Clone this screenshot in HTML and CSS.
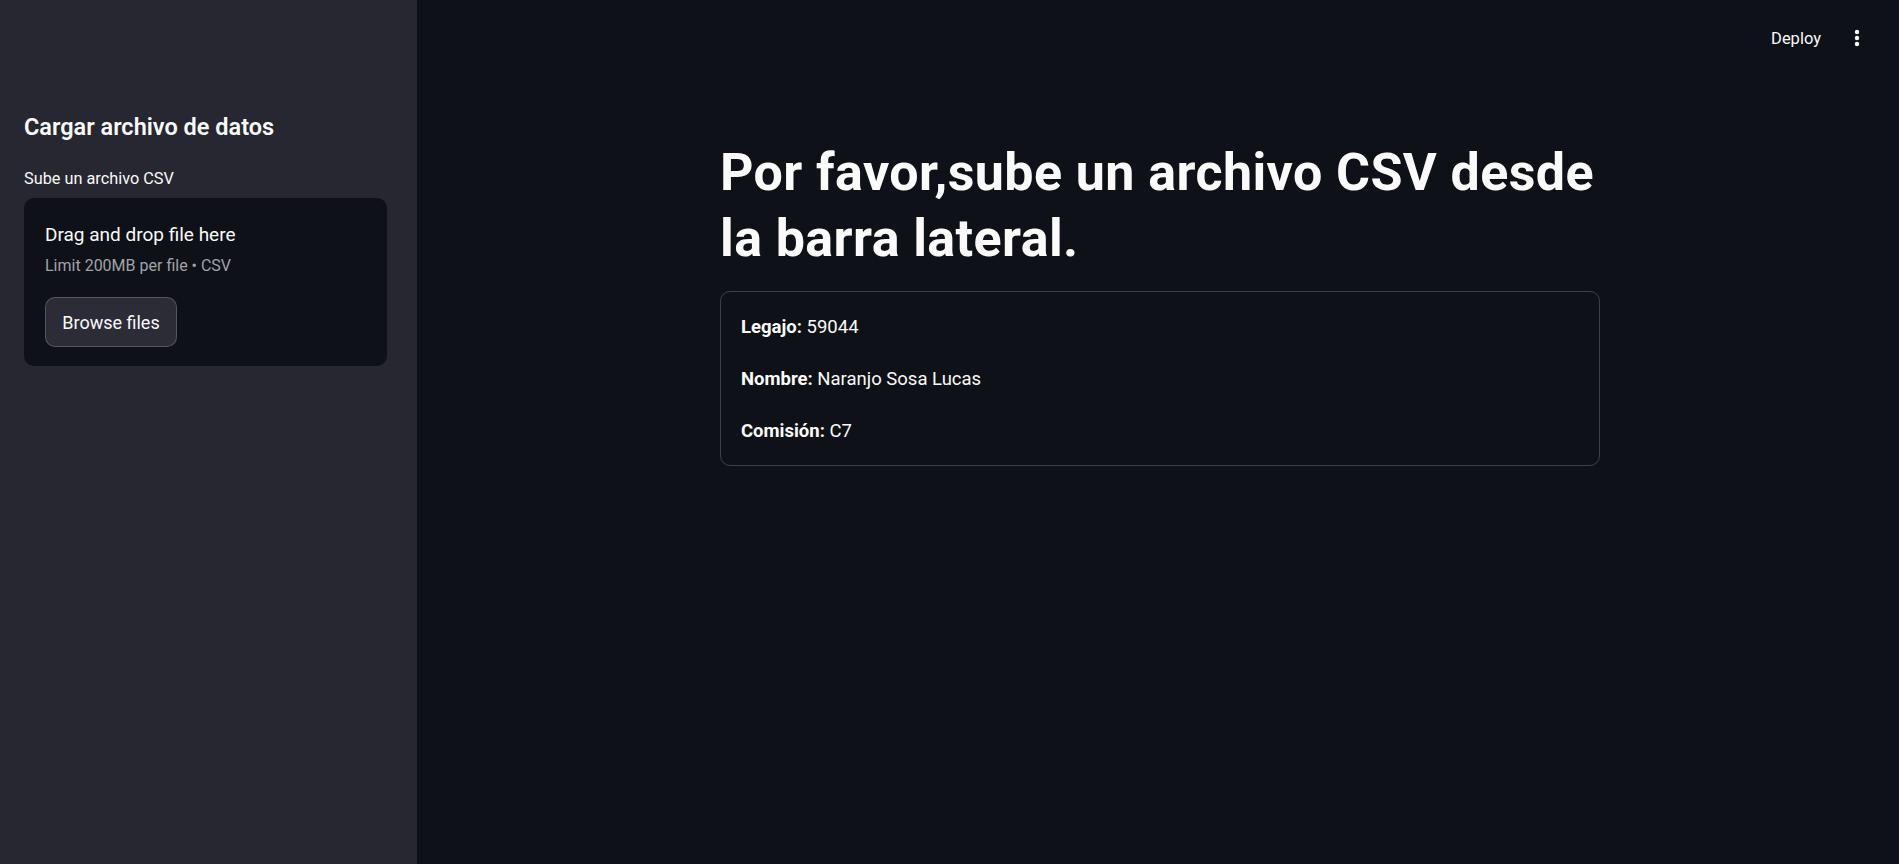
FILE: index.html
```html
<!DOCTYPE html>
<html lang="es">
<head>
<meta charset="utf-8">
<title>App</title>
<link rel="stylesheet" href="styles.css">
</head>
<body>
<div class="app">
  <aside class="sidebar">
    <h2 class="side-title">Cargar archivo de datos</h2>
    <div class="side-label">Sube un archivo CSV</div>
    <div class="uploader">
      <div class="drop-title">Drag and drop file here</div>
      <div class="drop-limit">Limit 200MB per file • CSV</div>
      <button class="browse">Browse files</button>
    </div>
  </aside>
  <main class="main">
    <header class="topbar">
      <span class="deploy">Deploy</span>
      <span class="menu">
        <svg width="6" height="18" viewBox="0 0 6 18"><circle cx="3" cy="3" r="2.2" fill="#fafafa"/><circle cx="3" cy="9" r="2.2" fill="#fafafa"/><circle cx="3" cy="15" r="2.2" fill="#fafafa"/></svg>
      </span>
    </header>
    <section class="block">
      <h1 class="title">Por favor,sube un archivo CSV desde la barra lateral.</h1>
      <div class="card">
        <p><strong>Legajo:</strong> 59044</p>
        <p><strong>Nombre:</strong> Naranjo Sosa Lucas</p>
        <p><strong>Comisión:</strong> C7</p>
      </div>
    </section>
  </main>
</div>
</body>
</html>
```
FILE: styles.css
```css
html, body {
  margin: 0;
  padding: 0;
  height: 100%;
}
body {
  background: #0e1117;
  color: #fafafa;
  font-family: Roboto, "Noto Sans", sans-serif;
  overflow: hidden;
}
.app {
  display: flex;
  height: 100vh;
}
.sidebar {
  width: 417px;
  flex: 0 0 417px;
  box-sizing: border-box;
  background: #262730;
  padding: 111px 30px 0 24px;
}
.side-title {
  margin: 0;
  font-size: 23.5px;
  font-weight: 600;
  line-height: 32px;
}
.side-label {
  margin-top: 26px;
  font-size: 16.3px;
  line-height: 20px;
}
.uploader {
  margin-top: 9px;
  height: 168px;
  box-sizing: border-box;
  background: #0e1117;
  border-radius: 10px;
  padding: 25px 21px 0 21px;
}
.drop-title {
  font-size: 19px;
  line-height: 24px;
}
.drop-limit {
  margin-top: 9px;
  font-size: 16px;
  line-height: 20px;
  color: #a0a3ab;
}
.browse {
  display: block;
  margin-top: 21px;
  width: 132px;
  height: 50px;
  box-sizing: border-box;
  background: #2b2c36;
  border: 1px solid rgba(250, 250, 250, 0.2);
  border-radius: 10px;
  color: #fafafa;
  font-family: inherit;
  font-size: 18px;
  padding: 0;
}
.main {
  flex: 1;
  display: flex;
  flex-direction: column;
  padding-left: 4px;
}
.topbar {
  display: flex;
  justify-content: flex-end;
  align-items: center;
  height: 76px;
  padding-right: 39px;
  gap: 33px;
}
.deploy {
  font-size: 16.5px;
  font-weight: 400;
}
.menu {
  display: flex;
  align-items: center;
}
.block {
  width: 880px;
  margin: 0 auto;
  padding-top: 64px;
}
.title {
  margin: 0 0 19px 0;
  font-size: 52px;
  font-weight: 700;
  letter-spacing: 0.4px;
  line-height: 66px;
}
.card {
  border: 1px solid rgba(250, 250, 250, 0.2);
  border-radius: 10px;
  padding: 19px 20px 18px 20px;
  height: 175px;
  box-sizing: border-box;
}
.card p {
  margin: 0 0 20px 0;
  font-size: 18.5px;
  line-height: 32px;
}
.card p:last-child {
  margin-bottom: 0;
}
.card strong {
  font-weight: 700;
}
```
